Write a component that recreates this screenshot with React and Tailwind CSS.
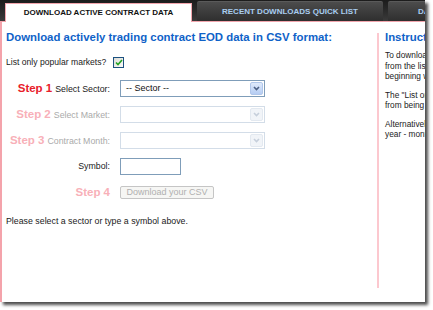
import React from "react";

function Select({ label, disabled }) {
  return (
    <div
      className={`w-[145px] h-[17px] border flex items-center justify-between bg-white ${
        disabled ? "border-[#d3dde8]" : "border-[#7f9db9]"
      }`}
    >
      <span className="pl-[5px] text-[9px] text-[#111]">{label}</span>
      <span
        className={`w-[13px] h-[13px] mr-[1px] rounded-[2px] flex items-center justify-center ${
          disabled
            ? "bg-[#f1f4f8] border border-[#e3e9f0]"
            : "bg-gradient-to-b from-[#dfeafb] to-[#b6cdf3] border border-[#b1c7ea]"
        }`}
      >
        <svg width="7" height="5" viewBox="0 0 7 5">
          <path
            d="M1 1 L3.5 3.5 L6 1"
            fill="none"
            stroke={disabled ? "#c6cfdb" : "#4d6185"}
            strokeWidth="1.6"
          />
        </svg>
      </span>
    </div>
  );
}

function Row({ step, label, active, faded, children }) {
  return (
    <div className="h-[26px] flex items-center">
      <div className="w-[104px] flex items-baseline justify-end gap-[3px] whitespace-nowrap">
        {step && (
          <span
            className={`text-[11.5px] font-bold ${
              active ? "text-[#e8202a]" : "text-[#f8b0b8]"
            }`}
          >
            {step}
          </span>
        )}
        {label && (
          <span
            className={`text-[8.8px] ${
              faded ? "text-[#aaaaaa]" : "text-[#1a1a1a]"
            }`}
          >
            {label}
          </span>
        )}
      </div>
      <div className="ml-[10px]">{children}</div>
    </div>
  );
}

export default function App() {
  return (
    <div className="w-[433px] h-[310px] bg-white overflow-hidden font-['Liberation_Sans',Arial,sans-serif]">
      <div className="w-[425px] h-[302px] bg-white shadow-[3px_3px_3px_rgba(0,0,0,0.7)] overflow-hidden flex flex-col">
        {/* tabs */}
        <div className="h-[22px] shrink-0 bg-gradient-to-b from-[#1c1c1c] to-[#3a3a3a] border-b border-[#f2a5ad] flex items-end pl-[5px] gap-[5px]">
          <div className="w-[187px] shrink-0 h-[19px] -mb-px bg-white border border-b-0 border-[#f2a5ad] flex items-center justify-center text-[8px] font-bold text-[#111] whitespace-nowrap">
            DOWNLOAD ACTIVE CONTRACT DATA
          </div>
          <div className="w-[186px] shrink-0 h-[20px] rounded-t-[2px] bg-gradient-to-b from-[#4c4c4c] to-[#2f2f2f] border-t border-[#5a5a5a] flex items-center justify-center text-[8px] font-bold text-[#a9cdf0] whitespace-nowrap">
            RECENT DOWNLOADS QUICK LIST
          </div>
          <div className="w-[120px] shrink-0 h-[20px] rounded-t-[2px] bg-gradient-to-b from-[#4c4c4c] to-[#2f2f2f] border-t border-[#5a5a5a] flex items-center pl-[30px] text-[8px] font-bold text-[#a9cdf0] whitespace-nowrap">
            DATA
          </div>
        </div>

        {/* body */}
        <div className="flex-1 flex border-l-2 border-[#f4a3ab]">
          <div className="w-[375px] shrink-0 pl-[4px] pt-[9px]">
            <h1 className="text-[11.4px] leading-[13px] font-bold text-[#0f62c8] whitespace-nowrap">
              Download actively trading contract EOD data in CSV format:
            </h1>
            <div className="mt-[12px] flex items-center gap-[7px] text-[8.6px] text-[#1a1a1a]">
              <span>List only popular markets?</span>
              <span className="w-[11px] h-[11px] border border-[#1c5180] bg-gradient-to-br from-[#dcdcd6] to-[#fbfbf9] flex items-center justify-center">
                <svg width="8" height="7" viewBox="0 0 8 7">
                  <path
                    d="M1 3.5 L3 5.5 L7 1"
                    fill="none"
                    stroke="#21a121"
                    strokeWidth="1.6"
                  />
                </svg>
              </span>
            </div>

            <div className="mt-[7px]">
              <Row step="Step 1" label="Select Sector:" active>
                <Select label="-- Sector --" />
              </Row>
              <Row step="Step 2" label="Select Market:" faded>
                <Select disabled />
              </Row>
              <Row step="Step 3" label="Contract Month:" faded>
                <Select disabled />
              </Row>
              <Row label="Symbol:">
                <div className="w-[61px] h-[17px] border border-[#7f9db9] bg-white" />
              </Row>
              <Row step="Step 4">
                <div className="w-[94px] h-[13px] border border-[#c5c5c5] rounded-[2px] bg-[#f6f6f4] flex items-center justify-center text-[9px] text-[#b0b0b0] whitespace-nowrap">
                  Download your CSV
                </div>
              </Row>
            </div>

            <p className="mt-[9px] text-[8.8px] text-[#1a1a1a]">
              Please select a sector or type a symbol above.
            </p>
          </div>

          <div className="w-[2px] h-[255px] mt-[11px] bg-[#fcc8cf] shrink-0" />

          <div className="pl-[6px] pt-[9px] whitespace-nowrap">
            <h2 className="text-[11.4px] leading-[13px] font-bold text-[#0f62c8]">
              Instructions
            </h2>
            <div className="mt-[6px] text-[8.3px] leading-[10.5px] text-[#222]">
              <p>To download end-of-day data,</p>
              <p>from the lists on the left,</p>
              <p>beginning with a sector.</p>
              <p className="mt-[8px]">The "List only popular markets"</p>
              <p>from being shown.</p>
              <p className="mt-[8px]">Alternatively, type a symbol and</p>
              <p>year - month code.</p>
            </div>
          </div>
        </div>
      </div>
    </div>
  );
}
